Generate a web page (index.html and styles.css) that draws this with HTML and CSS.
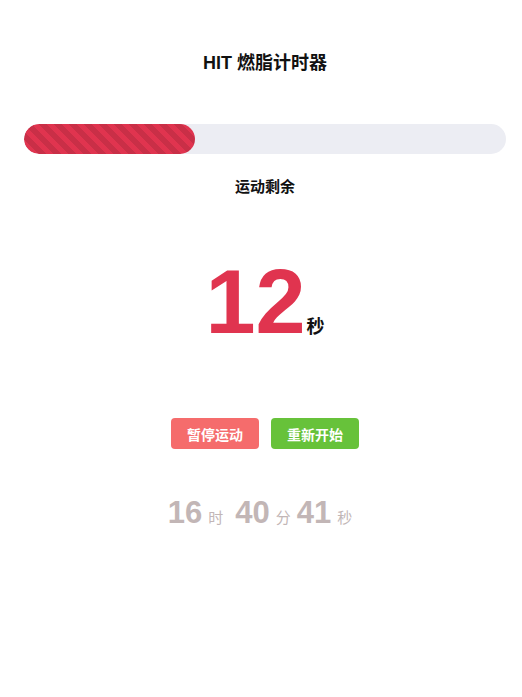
FILE: index.html
```html
<!DOCTYPE html>
<html lang="zh">
<head>
<meta charset="utf-8">
<title>HIT 燃脂计时器</title>
<link rel="stylesheet" href="styles.css">
</head>
<body>
<div class="page">
  <h1 class="title">HIT 燃脂计时器</h1>
  <div class="progress">
    <div class="progress-fill" style="width: 35.5%"></div>
  </div>
  <div class="label">运动剩余</div>
  <div class="countdown">
    <span class="count-num">12</span><span class="count-unit">秒</span>
  </div>
  <div class="actions">
    <button class="btn btn-danger">暂停运动</button>
    <button class="btn btn-success">重新开始</button>
  </div>
  <div class="clock">
    <span class="clock-num">16</span><span class="clock-unit clock-unit-wide">时</span>
    <span class="clock-num">40</span><span class="clock-unit">分</span>
    <span class="clock-num">41</span><span class="clock-unit clock-unit-last">秒</span>
  </div>
</div>
</body>
</html>
```
FILE: styles.css
```css
* { box-sizing: border-box; }
html, body { margin: 0; padding: 0; background: #fff; }
body {
  font-family: "Liberation Sans", "Noto Sans CJK SC", sans-serif;
  color: #111;
}
.page {
  display: flex;
  flex-direction: column;
  align-items: stretch;
  padding: 50px 16px 0 24px;
}
.title {
  margin: 0;
  font-size: 18px;
  font-weight: bold;
  text-align: center;
  line-height: 26px;
}
.progress {
  margin-top: 48px;
  height: 30px;
  border-radius: 15px;
  background: #ecedf3;
  overflow: hidden;
}
.progress-fill {
  height: 100%;
  border-radius: 15px;
  background-color: #e0344f;
  background-image: linear-gradient(45deg,
    rgba(0,0,0,0.1) 25%, transparent 25%, transparent 50%,
    rgba(0,0,0,0.1) 50%, rgba(0,0,0,0.1) 75%, transparent 75%, transparent);
  background-size: 15px 15px;
}
.label {
  margin-top: 22px;
  text-align: center;
  font-size: 15px;
  font-weight: bold;
  line-height: 22px;
}
.countdown {
  margin-top: 54px;
  display: flex;
  justify-content: center;
  align-items: baseline;
  line-height: 100px;
}
.count-num {
  font-size: 90px;
  font-weight: bold;
  color: #e0344f;
}
.count-unit {
  font-size: 18px;
  font-weight: bold;
  margin-left: 1px;
}
.actions {
  margin-top: 41px;
  display: flex;
  justify-content: center;
  gap: 12px;
}
.btn {
  border: none;
  border-radius: 4px;
  color: #fff;
  font-family: "Liberation Sans", "Noto Sans CJK SC", sans-serif;
  font-size: 14px;
  font-weight: bold;
  height: 31px;
  padding: 0 16px;
  width: 88px;
}
.btn-danger { background: #f56c6c; }
.btn-success { background: #67c23a; }
.clock {
  margin-top: 44px;
  display: flex;
  justify-content: center;
  align-items: baseline;
  color: #c2b6b6;
  line-height: 40px;
  padding-right: 10px;
}
.clock-num {
  font-size: 31px;
  font-weight: bold;
}
.clock-unit {
  font-size: 15px;
  margin: 0 6px;
}
.clock-unit-wide { margin-right: 12px; }
.clock-unit-last { margin-right: 0; }
```
